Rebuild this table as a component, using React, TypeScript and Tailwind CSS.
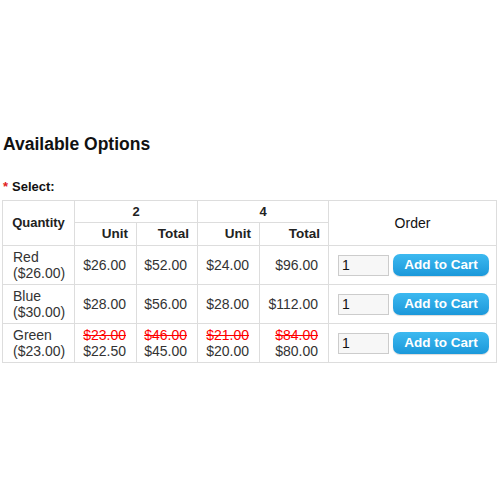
import React from 'react'

type Row = {
  name: string
  base: string
  cells: { old?: string; price: string }[]
}

const rows: Row[] = [
  {
    name: 'Red',
    base: '($26.00)',
    cells: [{ price: '$26.00' }, { price: '$52.00' }, { price: '$24.00' }, { price: '$96.00' }],
  },
  {
    name: 'Blue',
    base: '($30.00)',
    cells: [{ price: '$28.00' }, { price: '$56.00' }, { price: '$28.00' }, { price: '$112.00' }],
  },
  {
    name: 'Green',
    base: '($23.00)',
    cells: [
      { old: '$23.00', price: '$22.50' },
      { old: '$46.00', price: '$45.00' },
      { old: '$21.00', price: '$20.00' },
      { old: '$84.00', price: '$80.00' },
    ],
  },
]

export default function App() {
  return (
    <div className="w-[500px] h-[500px] bg-white text-[#333] font-['Liberation_Sans',Arial,sans-serif]">
      <div className="pt-[133px] px-[2px]">
        {/* Heading */}
        <h2 className="text-[17.5px] font-bold text-[#111] leading-[22px] pl-px">Available Options</h2>

        {/* Select label */}
        <p className="mt-[24px] text-[13px] font-bold text-[#111] leading-[16px] pl-px">
          <span className="text-[#e02020] mr-[4px]">*</span>Select:
        </p>

        {/* Options table */}
        <table className="mt-[5px] w-[495px] border-collapse table-fixed text-[14px] leading-[16px]">
          <colgroup>
            <col className="w-[72px]" />
            <col className="w-[62px]" />
            <col className="w-[61px]" />
            <col className="w-[62px]" />
            <col className="w-[69px]" />
            <col />
          </colgroup>
          <thead>
            <tr className="h-[22px]">
              <th rowSpan={2} className="border border-[#ddd] text-[13px] font-bold text-[#222] text-center">
                Quantity
              </th>
              <th colSpan={2} className="border border-[#ddd] text-[13px] font-bold text-[#222] text-center">
                2
              </th>
              <th colSpan={2} className="border border-[#ddd] text-[13px] font-bold text-[#222] text-center">
                4
              </th>
              <th rowSpan={2} className="border border-[#ddd] text-[14px] font-normal text-[#111] text-center">
                Order
              </th>
            </tr>
            <tr className="h-[23px]">
              <th className="border border-[#ddd] text-[13.5px] font-bold text-[#222] text-right pr-[8px]">Unit</th>
              <th className="border border-[#ddd] text-[13.5px] font-bold text-[#222] text-right pr-[8px]">Total</th>
              <th className="border border-[#ddd] text-[13.5px] font-bold text-[#222] text-right pr-[8px]">Unit</th>
              <th className="border border-[#ddd] text-[13.5px] font-bold text-[#222] text-right pr-[8px]">Total</th>
            </tr>
          </thead>
          <tbody>
            {rows.map((r) => (
              <tr key={r.name} className="h-[39px]">
                <td className="border border-[#ddd] pl-[10px] align-middle">
                  <div>{r.name}</div>
                  <div>{r.base}</div>
                </td>
                {r.cells.map((c, i) => (
                  <td key={i} className="border border-[#ddd] text-right pr-[10px] align-middle">
                    {c.old && <div className="text-[#ff0000] line-through">{c.old}</div>}
                    <div>{c.price}</div>
                  </td>
                ))}
                <td className="border border-[#ddd] pl-[9px] align-middle">
                  <div className="flex items-center gap-[4px]">
                    <input
                      defaultValue="1"
                      className="w-[51px] h-[21px] border border-[#ccc] bg-[#f7f7f7] px-[3px] text-[14px] text-[#111] outline-none"
                    />
                    <button className="w-[96px] h-[22px] rounded-[7px] bg-gradient-to-b from-[#3cb9f0] to-[#1a98da] text-white text-[13.5px] font-bold leading-none shadow-[0_1px_1px_rgba(0,0,0,0.15)]">
                      Add to Cart
                    </button>
                  </div>
                </td>
              </tr>
            ))}
          </tbody>
        </table>
      </div>
    </div>
  )
}
